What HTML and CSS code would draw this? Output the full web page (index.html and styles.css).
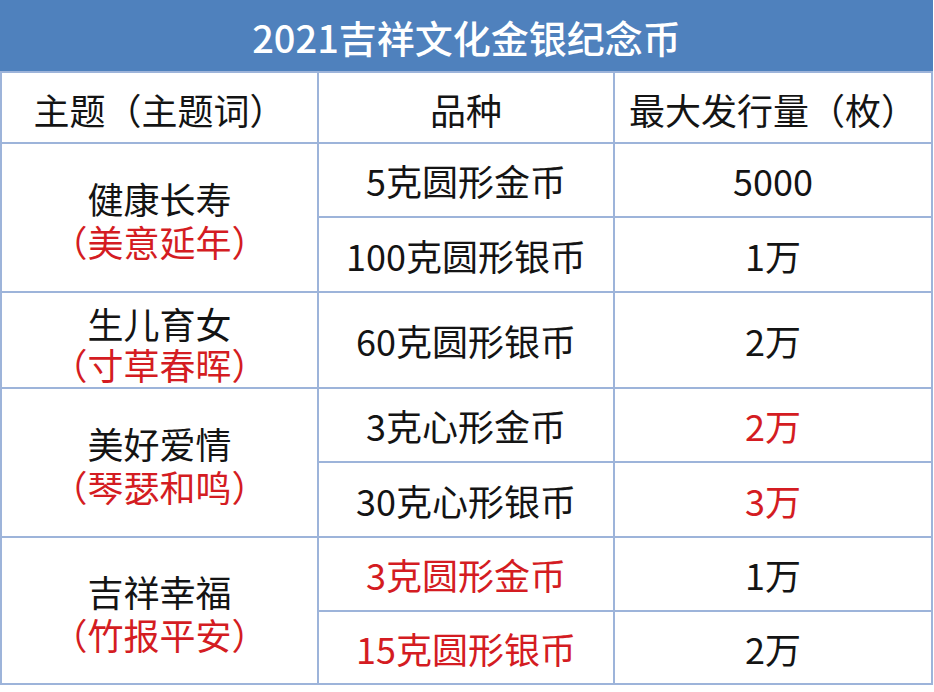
FILE: index.html
```html
<!DOCTYPE html>
<html lang="zh-CN">
<head>
<meta charset="utf-8">
<title>2021吉祥文化金银纪念币</title>
<link rel="stylesheet" href="styles.css">
</head>
<body>
<div class="sheet">
  <div class="cell title">2021吉祥文化金银纪念币</div>

  <div class="cell head">主题（主题词）</div>
  <div class="cell head">品种</div>
  <div class="cell head">最大发行量（枚）</div>

  <div class="cell theme span2 g1"><span>健康长寿</span><span class="red">（美意延年）</span></div>
  <div class="cell">5克圆形金币</div>
  <div class="cell">5000</div>
  <div class="cell">100克圆形银币</div>
  <div class="cell">1万</div>

  <div class="cell theme g2"><span>生儿育女</span><span class="red">（寸草春晖）</span></div>
  <div class="cell">60克圆形银币</div>
  <div class="cell">2万</div>

  <div class="cell theme span2 g3"><span>美好爱情</span><span class="red">（琴瑟和鸣）</span></div>
  <div class="cell">3克心形金币</div>
  <div class="cell red">2万</div>
  <div class="cell">30克心形银币</div>
  <div class="cell red">3万</div>

  <div class="cell theme span2 g4"><span>吉祥幸福</span><span class="red">（竹报平安）</span></div>
  <div class="cell red">3克圆形金币</div>
  <div class="cell">1万</div>
  <div class="cell red">15克圆形银币</div>
  <div class="cell">2万</div>
</div>
</body>
</html>
```

FILE: styles.css
```css
html, body {
  margin: 0;
  padding: 0;
  background: #ffffff;
}

body {
  width: 934px;
  height: 692px;
  overflow: hidden;
  font-family: "Noto Sans CJK SC", "Noto Sans", sans-serif;
  color: #141414;
}

.sheet {
  width: 933px;
  box-sizing: border-box;
  display: grid;
  grid-template-columns: 315px 294px 316px;
  grid-template-rows: 69px 69px 72px 73px 94px 72px 73px 72px 71px;
  gap: 2px;
  padding: 2px;
  background: #9db4da;
}

.cell {
  background: #ffffff;
  display: flex;
  align-items: center;
  justify-content: center;
  font-size: 36px;
  line-height: 1;
  white-space: nowrap;
}

.title {
  grid-column: 1 / span 3;
  background: #4f81bd;
  color: #ffffff;
  font-size: 38px;
  font-weight: 500;
  margin: -2px -2px 0 -2px;
  padding-top: 2px;
}

.head {
  padding-top: 2px;
}

.theme {
  flex-direction: column;
  line-height: 43px;
  padding-top: 4px;
}

.theme.g2 {
  line-height: 41px;
  padding-top: 8px;
}

.span2 {
  grid-row: span 2;
}

.red {
  color: #d41c22;
}
```
